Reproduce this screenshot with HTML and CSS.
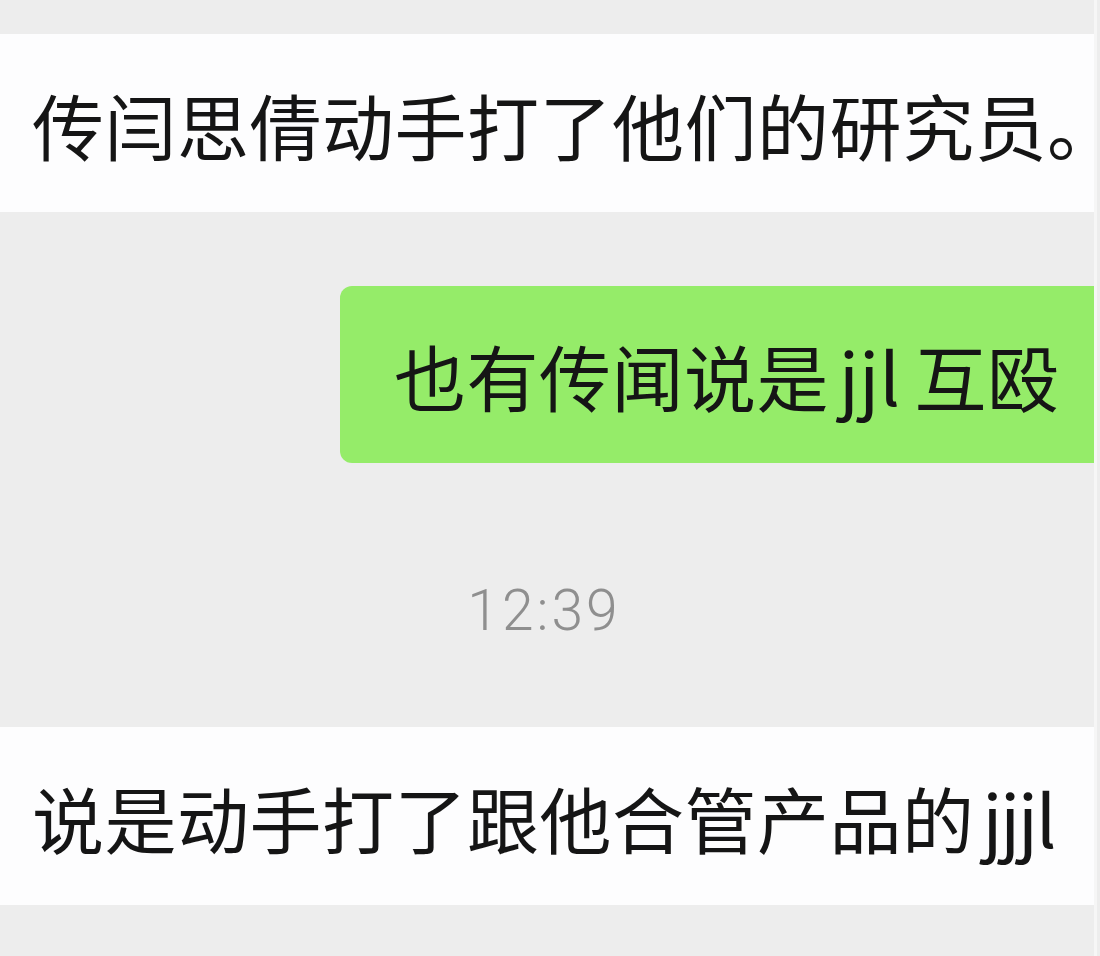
FILE: index.html
```html
<!DOCTYPE html>
<html lang="zh-CN">
  <head>
    <meta charset="UTF-8" />
    <meta name="viewport" content="width=device-width, initial-scale=1.0" />
    <title>聊天记录</title>
    <link rel="stylesheet" href="styles.css">
  </head>
  <body>
    <div class="page">
      <div class="msg-line">传闫思倩动手打了他们的研究员。</div>
      <div class="chat">
        <div class="bubble">也有传闻说是<span class="latin">jjl</span>互殴</div>
        <div class="time">12:39</div>
      </div>
      <div class="msg-line">说是动手打了跟他合管产品的<span class="latin tail">jjjl</span></div>
    </div>
  </body>
</html>
```

FILE: styles.css
```css
html,
body {
  margin: 0;
  height: 100%;
}
body {
  background: #ededed;
  font-family: "Noto Sans CJK SC", "Noto Sans", sans-serif;
  color: #151515;
}
.page {
  display: flex;
  flex-direction: column;
  width: 1097px;
  height: 100%;
  padding-top: 34px;
  box-sizing: border-box;
  border-right: 3px solid #f6f6f6;
}
.msg-line {
  display: flex;
  align-items: center;
  height: 178px;
  padding-left: 32px;
  background: #fdfdfe;
  font-size: 72px;
  letter-spacing: 0.5px;
  font-feature-settings: "halt";
  white-space: nowrap;
}
.chat {
  display: flex;
  flex-direction: column;
  height: 515px;
}
.bubble {
  display: flex;
  align-items: center;
  align-self: flex-end;
  width: 700px;
  height: 177px;
  margin-top: 74px;
  padding-left: 54px;
  background: #95ec69;
  border-radius: 12px 0 0 12px;
  font-size: 72px;
  letter-spacing: 0.5px;
  white-space: nowrap;
}
.latin {
  margin: 0 14px 0 10px;
}
.tail {
  margin: 0 0 0 8px;
  letter-spacing: -2px;
}
.time {
  margin-top: 116px;
  text-align: center;
  font-family: Roboto, "Noto Sans", sans-serif;
  font-weight: 300;
  font-size: 57px;
  line-height: 64px;
  letter-spacing: 3px;
  color: #8f8f8f;
  padding-right: 6px;
}
```
